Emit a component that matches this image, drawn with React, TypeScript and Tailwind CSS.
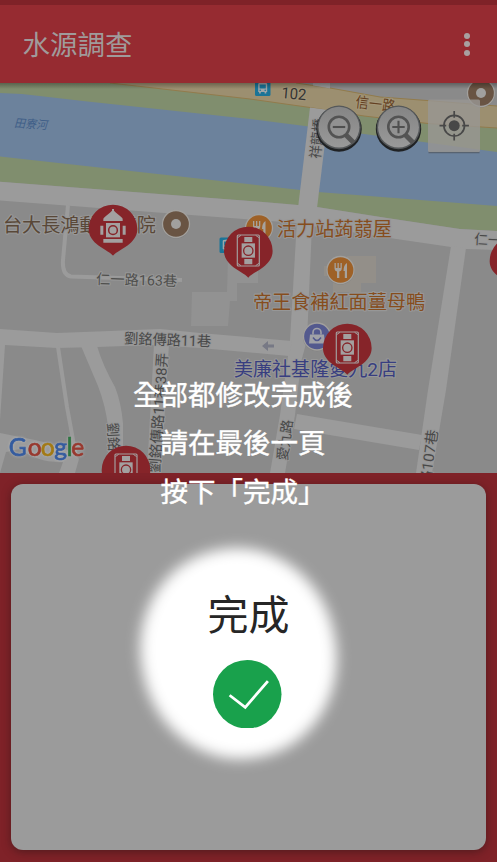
import React from "react";

const CJK = "font-['Roboto','Noto_Sans_CJK_TC',sans-serif]";

type PinProps = { x: number; y: number; kind: "hydrant" | "manhole" };

function Pin({ x, y, kind }: PinProps) {
  return (
    <g transform={`translate(${x} ${y}) scale(0.3333)`}>
      <path d="M0 80C-10 68-34 58-50 44C-64 32-73 18-73 0A73 73 0 0 1 73 0C73 18 64 32 50 44C34 58 10 68 0 80Z" fill="#862429" />
      {kind === "hydrant" ? (
        <g fill="#a3a0a0">
          <path d="M-3-60H3V-55C9-49 20-40 27-34L29-31V-24H-29V-31L-27-34C-20-40-9-49-3-55Z" />
          <path d="M-21-18H21V25H-21Z" />
          <circle r="13" cy="3.5" fill="none" stroke="#862429" strokeWidth="4.5" />
          <path d="M-38-10H-29V17H-38ZM29-10H38V17H29ZM-29 30H29V41H-29Z" />
        </g>
      ) : (
        <g fill="none" stroke="#a3a0a0">
          <rect x="-33" y="-48" width="66" height="93" rx="3" strokeWidth="3.5" />
          <path d="M-32-40L-22-47M32-40L22-47M-32 37L-22 44M32 37L22 44" strokeWidth="3" />
          <path d="M-20-23H20V20H-20Z" fill="#a3a0a0" stroke="none" />
          <circle r="14" cy="-1" stroke="#862429" strokeWidth="4" />
          <path d="M-12-42H12V-27H-12ZM-12 24H12V40H-12Z" fill="#a3a0a0" stroke="none" />
        </g>
      )}
    </g>
  );
}

function Place({ x, y, color, children }: { x: number; y: number; color: string; children?: React.ReactNode }) {
  return (
    <g transform={`translate(${x} ${y})`}>
      <circle r="14" cy="0.7" fill="#747474" opacity="0.6" />
      <circle r="13.5" fill={color} stroke="#a2a09d" strokeWidth="1.3" />
      {children}
    </g>
  );
}

function Fork() {
  return (
    <path
      d="M-6-7V-2Q-6 1-3.5 1.5V8H-1.2V1.5Q1.3 1 1.3-2V-7H0V-2H-1.7V-7H-3V-2H-4.7V-7ZM6.5-7Q3-5 3 1H4.3V8H6.5Z"
      fill="#a6a29d"
    />
  );
}

function Bus({ x, y }: { x: number; y: number }) {
  return (
    <g transform={`translate(${x} ${y})`}>
      <rect width="15.5" height="15.5" rx="1.5" fill="#1b7497" />
      <path d="M3.2 3.5Q3.2 2 7.7 2T12.2 3.5V11.5H11.3V13H9.6V11.5H5.8V13H4.1V11.5H3.2Z" fill="#a0a6a8" />
      <path d="M4.6 4H10.8V8H4.6Z" fill="#1b7497" />
      <circle cx="5.2" cy="9.7" r=".8" fill="#1b7497" />
      <circle cx="10.2" cy="9.7" r=".8" fill="#1b7497" />
    </g>
  );
}

type LabelProps = {
  x: number;
  y: number;
  size: number;
  width: number;
  fill: string;
  rotate?: number;
  italic?: boolean;
  halo?: string;
  children: string;
};

function Label({ x, y, size, width, fill, rotate = 0, italic = false, halo = "#979797", children }: LabelProps) {
  return (
    <text
      transform={`translate(${x} ${y}) rotate(${rotate})${italic ? " skewX(-12)" : ""}`}
      fontSize={size}
      textLength={width}
      lengthAdjust="spacingAndGlyphs"
      fill={fill}
      stroke={halo}
      strokeWidth="2.2"
      strokeLinejoin="round"
      paintOrder="stroke"
    >
      {children}
    </text>
  );
}

function ZoomButton({ x, plus = false }: { x: number; plus?: boolean }) {
  return (
    <g transform={`translate(${x} 128)`}>
      <circle cy="1" r="22.7" fill="#202224" />
      <circle cy="-0.6" r="21.8" fill="#55585a" />
      <circle cy="-0.8" r="20.4" fill="url(#metal)" />
      <path d="M7 7L14.5 14.5" stroke="#555" strokeWidth="5" />
      <circle r="10.2" cy="-1" fill="#929292" stroke="#535353" strokeWidth="2.6" />
      <path d={plus ? "M-6.2-1H6.2M0-7.2V5.2" : "M-6.2-1H6.2"} stroke="#505050" strokeWidth="2.1" />
    </g>
  );
}

function MapView() {
  return (
    <svg viewBox="0 83 497 390" width="497" height="390" className={`block ${CJK}`}>
      <defs>
        <linearGradient id="metal" x1="0" y1="0" x2="0" y2="1">
          <stop offset="0" stopColor="#858585" />
          <stop offset="1" stopColor="#999999" />
        </linearGradient>
        <linearGradient id="barShade" x1="0" y1="0" x2="0" y2="1">
          <stop offset="0" stopColor="#000" stopOpacity=".3" />
          <stop offset="1" stopColor="#000" stopOpacity="0" />
        </linearGradient>
      </defs>
      <rect y="83" width="497" height="390" fill="#8a8a8a" />
      <path d="M0 83H330L497 106V231L460 229L387 218L317 207L298 205L250 201L0 181.700Z" fill="#808e6e" />
      <path d="M0 93L22 94L83 101L250 119L305 126L497 152V206L318 192L250 184.300L0 156.500Z" fill="#6c829c" />
      <path d="M290 83H497V106L427 101L380 97L330 88Z" fill="#8a8a8a" />
      <path d="M110 83H296L330 88L380 97L427 100.500L497 106V128L428 123.500L364 116L310 107.500L250 99Z" fill="#9c8f70" />
      <path d="M110 83L250 99L310 107.500L364 116L428 123.500L497 128M296 83L330 88L380 97L427 100.500L497 106" stroke="#927b4c" strokeWidth="1" fill="none" />
      <path d="M313 83H330V88.500L313 85.500Z" fill="#9b9b9b" />

      <g fill="#929292">
        <path d="M228 255H258V283H237V301H230L228 326H191L192 292H227Z" />
        <path d="M347 256H376V283H361V292H333V276H324V266H347Z" fill="#938f89" />
      </g>
      <g fill="#9b9b9b">
        <path d="M0 181.700L250 201L298 205L317 207L387 218L460 229L497 231V250L466 249L451 247L393 238.500L312 226L297 223L250 219.500L0 200.500Z" />
        <path d="M310 107.500L329 110L317 208H298Z" />
        <path d="M297 220L312 225L307 340L301 362L295 415L285 473H270L280 415L288 356L290 340Z" />
        <path d="M297 414L422 435L419 450L294 429Z" />
        <path d="M451 246L466 248L446 390L432 473H416L428 390Z" />
        <path d="M0 329L57 333L110 331L160 329L200 333L292 341L289 356L200 348L153 345L97 347L57 348L5 345L0 420Z" />
        <path d="M81 346H97Q103 366 115 387Q121 402 123 423V473H108V427Q106 407 98 386Z" />
        <path d="M154 344H169L161 473H147Z" />
        <path d="M0 433L35 440Q72 448 79 459L75 473H59L63 462Q38 463 20 449L6 452L0 473Z" />
      </g>
      <path d="M58 347L67 407L76 456M68 205L63 260Q62 275 71 276.500L182 280" fill="none" stroke="#9b9b9b" strokeWidth="4" />
      <path d="M262 346L268 341V344.500H274V347.500H268V351Z" fill="#777985" />

      <Bus x={255} y={80.500} />
      <Bus x={219.500} y={237.500} />
      <Label x={281} y={98} size={15.500} width={25} fill="#343434" rotate={5} halo="#a29578">102</Label>
      <Label x={355} y={107} size={15} width={40} fill="#644021" rotate={7} halo="#a29578">信一路</Label>
      <Label x={320} y={159} size={14} width={40} fill="#494949" rotate={-84}>祥龍橋</Label>
      <Label x={14} y={127} size={11.500} width={33} fill="#405f88" rotate={4} italic halo="#6c829c">田寮河</Label>
      <Label x={3} y={231.500} size={19.200} width={153} fill="#594838">台大長鴻動物醫院</Label>
      <Label x={96} y={284} size={14.300} width={81} fill="#50504e" rotate={1.500}>仁一路163巷</Label>
      <Label x={474} y={244} size={14} width={41} fill="#494949" rotate={3}>仁一路</Label>
      <Label x={124} y={343.500} size={14.500} width={87} fill="#494949" rotate={2}>劉銘傳路11巷</Label>
      <Label x={159.500} y={473} size={14.500} width={120} fill="#494949" rotate={-86}>劉銘傳路11巷38弄</Label>
      <Label x={107.500} y={423} size={14} width={57} fill="#494949" rotate={87}>劉銘傳路</Label>
      <Label x={287} y={461} size={14} width={41} fill="#494949" rotate={-82}>愛九路</Label>
      <Label x={430} y={486} size={14.500} width={56} fill="#494949" rotate={-82}>路107巷</Label>

      <Place x={176} y={224} color="#695443"><circle r="5" fill="#a1a09e" /></Place>
      <Place x={481} y={93} color="#695443"><circle r="5" fill="#a1a09e" /></Place>
      <Place x={259} y={228} color="#9e6127"><Fork /></Place>
      <Place x={340.500} y={270} color="#9e6127"><Fork /></Place>
      <Place x={317} y={336.500} color="#53598e">
        <path d="M-7-2H7L8 7H-8Z" fill="#a0a1a7" />
        <path d="M-4-2V-4A4 4 0 0 1 4-4V-2" fill="none" stroke="#a0a1a7" strokeWidth="1.600" />
        <path d="M-4 1Q0 7 4 1" fill="none" stroke="#53598e" strokeWidth="1.500" />
      </Place>
      <Label x={277} y={235.500} size={19.200} width={115} fill="#864d1d">活力站蒟蒻屋</Label>
      <Label x={253} y={309} size={19.200} width={172} fill="#864d1d">帝王食補紅面薑母鴨</Label>
      <Label x={234} y={375.500} size={19.200} width={163} fill="#383e80">美廉社基隆愛九2店</Label>

      <Pin x={113} y={229} kind="hydrant" />
      <Pin x={248.300} y={251} kind="manhole" />
      <Pin x={347.300} y={348} kind="manhole" />
      <Pin x={126} y={470} kind="manhole" />
      <Pin x={514} y={261} kind="manhole" />

      <ZoomButton x={339} />
      <ZoomButton x={398.500} plus />
      <path d="M428.500 152.400H479.500" stroke="#444" strokeOpacity=".5" strokeWidth="1.500" />
      <rect x="428" y="99.500" width="52" height="52.500" rx="1.500" fill="#989692" fillOpacity=".82" />
      <g transform="translate(454.200 125.700)" fill="none" stroke="#484848" strokeWidth="1.700">
        <circle r="10.300" />
        <circle r="5.500" fill="#484848" stroke="none" />
        <path d="M0-14.700V-8M0 8V14.700M-14.700 0H-8M8 0H14.700" />
      </g>

      <text
        y="455.500"
        fontSize="24.500"
        strokeWidth="0.700"
        className="font-['Lato',sans-serif] font-normal drop-shadow-[0_0_1.500px_#b5b5b5]"
      >
        <tspan x="8.800" fill="#355c9f" stroke="#355c9f">G</tspan>
        <tspan x="27.700" fill="#98392f" stroke="#98392f">o</tspan>
        <tspan x="40.700" fill="#a37a15" stroke="#a37a15">o</tspan>
        <tspan x="54.300" fill="#355c9f" stroke="#355c9f">g</tspan>
        <tspan x="66.700" fill="#2d7541" stroke="#2d7541">l</tspan>
        <tspan x="71.300" fill="#98392f" stroke="#98392f">e</tspan>
      </text>
      <rect y="83" width="497" height="6" fill="url(#barShade)" />
    </svg>
  );
}

export default function App() {
  return (
    <div className={`relative flex h-[862px] w-[497px] flex-col overflow-hidden bg-[#7f2228] ${CJK}`}>
      <div className="h-[5px] shrink-0 bg-[#7f2228]" />
      <header className="flex h-[78px] shrink-0 items-center justify-between bg-[#962b31] pr-[27.500px] pl-[22.500px]">
        <h1 className="pt-[3px] text-[27.500px] leading-none font-normal text-[#a09b9b]">水源調查</h1>
        <button aria-label="menu" className="flex flex-col gap-[2.500px]">
          <span className="size-[6px] rounded-full bg-[#a8a1a1]" />
          <span className="size-[6px] rounded-full bg-[#a8a1a1]" />
          <span className="size-[6px] rounded-full bg-[#a8a1a1]" />
        </button>
      </header>

      <div className="h-[389.500px] shrink-0 overflow-hidden">
        <MapView />
      </div>

      <main className="flex flex-1 px-[11px] pt-[11.500px] pb-[12.500px]">
        <section className="relative flex flex-1 flex-col items-center rounded-xl bg-[#9b9b9b] pt-[105px] shadow-[0_2px_8px_rgba(40,20,20,0.5)]">
          <div className="absolute top-[64px] left-[130px] h-[211px] w-[195px] -rotate-12 rounded-[49%] bg-white blur-[7px]" />
          <h2 className="relative text-[41px] leading-[54px] font-normal text-[#262626]">完成</h2>
          <svg viewBox="0 0 68 68" className="relative right-[1px] mt-[16.500px] size-[68.500px]">
            <circle cx="34" cy="34" r="34" fill="#19a14c" />
            <path d="M16.500 35L32 47L54.500 21" fill="none" stroke="white" strokeWidth="2.800" />
          </svg>
        </section>
      </main>

      <p className="absolute top-[372px] left-0 w-[486px] text-center text-[27.500px] leading-[48.300px] font-normal text-white [-webkit-text-stroke:0.4px_white]">
        全部都修改完成後
        <br />
        請在最後一頁
        <br />
        按下「完成」
      </p>
    </div>
  );
}
